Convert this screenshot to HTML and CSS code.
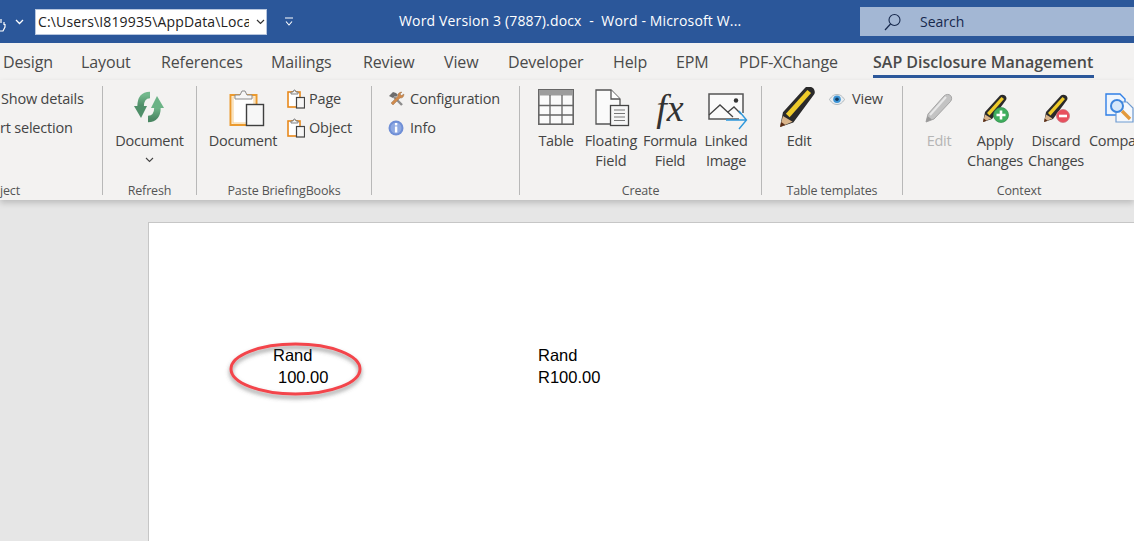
FILE: index.html
```html
<!DOCTYPE html>
<html lang="en">
<head>
<meta charset="utf-8">
<title>Word</title>
<link rel="stylesheet" href="styles.css">
</head>
<body>
<svg class="defs" width="0" height="0" aria-hidden="true">
  <defs>
    <linearGradient id="grn" x1="0" y1="0" x2="0" y2="1"><stop offset="0" stop-color="#72b88c"/><stop offset="1" stop-color="#4a8763"/></linearGradient>
    <symbol id="clipS" viewBox="0 0 18 20">
      <rect x="1" y="3" width="12" height="15" fill="#fff" stroke="#e8891c" stroke-width="1.6"/>
      <path d="M4 5V3h2l1-2h1l1 2h2v2z" fill="#f4f4f4" stroke="#777" stroke-width=".9"/>
      <rect x="9.500" y="8.500" width="8" height="10.500" fill="#f6f6f6" stroke="#444" stroke-width="1.200"/>
    </symbol>
    <symbol id="pencil" viewBox="0 0 30 30">
      <path d="M5 19 20 2.500c1-1 3.500-1 5 0s2 3.500 1 4.500L12 26l-9 3z" fill="#2a2a2a"/>
      <path d="M7 20 21.500 4l2.500 2L9.500 22.500z" fill="#efcb2a"/>
      <path d="M3 29l2-7.500 6.500 4z" fill="#d9b48a"/>
      <path d="M3 29l.9-3.400 2.700 2.100z" fill="#5b2c16"/>
    </symbol>
  </defs>
</svg>

<header class="titlebar">
  <svg class="touch" width="6" height="18" viewBox="0 0 6 18"><path d="M-3 8V3M1 8V4M4 10V7M-6 11l3 5h6l2-4V9" fill="none" stroke="#fff" stroke-width="1.200"/></svg>
  <svg class="chev" width="9" height="6" viewBox="0 0 9 6"><path d="M1 1l3.500 3.500L8 1" fill="none" stroke="#fff" stroke-width="1.300"/></svg>
  <div class="combo"><span class="combo-text">C:\Users\I819935\AppData\Local</span><svg width="9" height="6" viewBox="0 0 9 6"><path d="M1 1l3.500 3.500L8 1" fill="none" stroke="#333" stroke-width="1.200"/></svg></div>
  <svg class="qat" width="10" height="10" viewBox="0 0 10 10"><path d="M1 1h8M2 4.500l3 3.500 3-3.500" fill="none" stroke="#fff" stroke-width="1.100"/></svg>
  <div class="doc-title">Word Version 3 (7887).docx&nbsp; -&nbsp; Word - Microsoft W...</div>
  <div class="search">
    <svg width="18" height="18" viewBox="0 0 18 18"><circle cx="10.500" cy="7" r="5.500" fill="none" stroke="#17294d" stroke-width="1.100"/><path d="M6.500 11 1 17" stroke="#17294d" stroke-width="1.200"/></svg>
    <span>Search</span>
  </div>
</header>

<nav class="tabs">
  <span class="tab t-design">Design</span>
  <span class="tab t-layout">Layout</span>
  <span class="tab t-refs">References</span>
  <span class="tab t-mail">Mailings</span>
  <span class="tab t-review">Review</span>
  <span class="tab t-view">View</span>
  <span class="tab t-dev">Developer</span>
  <span class="tab t-help">Help</span>
  <span class="tab t-epm">EPM</span>
  <span class="tab t-pdf">PDF-XChange</span>
  <span class="tab tab-active">SAP Disclosure Management</span>
</nav>

<section class="ribbon">
  <div class="group g-object">
    <div class="group-body col-small">
      <span class="small-text s1">Show details</span>
      <span class="small-text s2">rt selection</span>
    </div>
    <div class="group-label left">ject</div>
  </div>

  <div class="group g-refresh">
    <div class="group-body">
      <div class="big">
        <svg class="big-icon refresh-icon" width="32" height="32" viewBox="0 0 32 32">
          <path d="M17 4C10 4 7.500 9 7.500 16" fill="none" stroke="url(#grn)" stroke-width="6.500"/>
          <path d="M1 15h13L8 27z" fill="#4f8f69"/>
          <path d="M15 28C22 28 24.500 23 24.500 16" fill="none" stroke="url(#grn)" stroke-width="6.500"/>
          <path d="M31 17H18L24 5z" fill="#6bb386"/>
        </svg>
        <span class="big-label">Document</span>
        <svg class="more" width="9" height="6" viewBox="0 0 9 6"><path d="M1 1l3.500 3.500L8 1" fill="none" stroke="#444" stroke-width="1.100"/></svg>
      </div>
    </div>
    <div class="group-label">Refresh</div>
  </div>

  <div class="group g-paste">
    <div class="group-body">
      <div class="big b-doc">
        <svg class="big-icon" width="36" height="38" viewBox="0 0 36 38">
          <rect x="1.500" y="6" width="26" height="30" fill="#fdf6e8" stroke="#eb9a2e" stroke-width="2"/>
          <rect x="4" y="8" width="21" height="26" fill="#fff" stroke="#f6cf94"/>
          <path d="M6 10V6h5l2-4h3l2 4h5v4z" fill="#f6f6f6" stroke="#8a8a8a"/>
          <rect x="17.500" y="15.500" width="17" height="21" fill="#f7f7f7" stroke="#3f3f3f" stroke-width="1.400"/>
        </svg>
        <span class="big-label">Document</span>
      </div>
      <div class="col-small paste-small">
        <div class="small-item"><svg width="18" height="20"><use href="#clipS"/></svg><span class="small-text">Page</span></div>
        <div class="small-item"><svg width="18" height="20"><use href="#clipS"/></svg><span class="small-text">Object</span></div>
      </div>
    </div>
    <div class="group-label">Paste BriefingBooks</div>
  </div>

  <div class="group g-config">
    <div class="group-body col-small config-small">
      <div class="small-item">
        <svg width="17" height="16" viewBox="0 0 17 16">
          <path d="M1 5l4-4 3 1 2 2-2 2-1-1-2 2z" fill="#6d6d6d"/>
          <path d="M6 6l8 8" stroke="#8c8c8c" stroke-width="2.400"/>
          <path d="M14 1l-2 2 1.500 1.500L16 3c0 3-2 4.500-4 4L5 14l-2-2 7-7c-.5-2 1-4 4-4z" fill="#d08a4c" stroke="#8d6a4a" stroke-width=".4"/>
        </svg>
        <span class="small-text">Configuration</span>
      </div>
      <div class="small-item">
        <svg width="17" height="16" viewBox="0 0 17 16">
          <circle cx="8" cy="8" r="7.500" fill="#6f8fd6"/><circle cx="8" cy="8" r="5.500" fill="#8ea9e2"/>
          <rect x="6.900" y="6.500" width="2.400" height="6" fill="#fff"/><rect x="6.900" y="3" width="2.400" height="2.400" fill="#fff"/>
        </svg>
        <span class="small-text">Info</span>
      </div>
    </div>
    <div class="group-label"></div>
  </div>

  <div class="group g-create">
    <div class="group-body create-body">
      <div class="big b-table">
        <svg class="big-icon" width="36" height="37" viewBox="0 0 36 37">
          <rect x=".800" y=".800" width="34.400" height="34.400" fill="#fafafa" stroke="#666" stroke-width="1.600"/>
          <rect x="1" y="1" width="34" height="5.500" fill="#9c9c9c"/>
          <path d="M12 6v29M24 6v29M1 16.500h34M1 26h34" stroke="#666" stroke-width="1.300"/>
        </svg>
        <span class="big-label">Table</span>
      </div>
      <div class="big b-float">
        <svg class="big-icon" width="35" height="38" viewBox="0 0 35 38">
          <path d="M1 1h15l9 9v25H1z" fill="#fafafa" stroke="#555" stroke-width="1.300"/>
          <path d="M16 1v9h9" fill="#fff" stroke="#555" stroke-width="1.300"/>
          <rect x="15.500" y="16.500" width="18" height="20" fill="#f6f6f6" stroke="#444" stroke-width="1.300"/>
          <path d="M19 21h11M19 24.500h11M19 28h11M19 31.500h11" stroke="#777" stroke-width="1.200"/>
        </svg>
        <span class="big-label">Floating<br>Field</span>
      </div>
      <div class="big b-formula">
        <span class="fx big-icon">fx</span>
        <span class="big-label">Formula<br>Field</span>
      </div>
      <div class="big b-linked">
        <svg class="big-icon" width="40" height="37" viewBox="0 0 40 37">
          <path d="M31 26H1V1h34v19" fill="#fafafa" stroke="#555" stroke-width="1.500"/>
          <path d="M1 22 12 12l13 12M20 19l6-5 7 7" fill="none" stroke="#444" stroke-width="1.300"/>
          <circle cx="28" cy="7.500" r="2.200" fill="#333"/>
          <path d="M18 27h20M31 18l7.500 9-7.500 9" fill="none" stroke="#2e98dc" stroke-width="1.400"/>
        </svg>
        <span class="big-label">Linked<br>Image</span>
      </div>
    </div>
    <div class="group-label">Create</div>
  </div>

  <div class="group g-templates">
    <div class="group-body templates-body">
      <div class="big b-edit">
        <svg class="big-icon edit-icon" width="37" height="40" viewBox="3 2 25 27"><use href="#pencil" width="30" height="30"/></svg>
        <span class="big-label">Edit</span>
      </div>
      <div class="small-item view-item">
        <svg width="16" height="11" viewBox="0 0 16 11">
          <path d="M.5 5.500C3 1.500 5.500.5 8 .5s5 1 7.500 5c-2.500 4-5 5-7.500 5S3 9.500.5 5.500z" fill="#e9eef2" stroke="#9aa3a9" stroke-width=".7"/>
          <circle cx="8" cy="5.200" r="3.800" fill="#3d95d6"/><circle cx="8" cy="5.200" r="1.800" fill="#143a5e"/>
        </svg>
        <span class="small-text">View</span>
      </div>
    </div>
    <div class="group-label">Table templates</div>
  </div>

  <div class="group g-context">
    <div class="group-body context-body">
      <div class="big b-c1">
        <svg class="big-icon c-icon" width="30" height="30" viewBox="0 0 30 30">
          <path d="M2 29l2-8L20 3c2-2 5-2 6.500-.5s1.500 4 0 6L10 26z" fill="#c3c3c3" stroke="#a5a5a5"/>
          <path d="M6 22 22 4" stroke="#e8e8e8" stroke-width="2"/>
          <path d="M2 29l1.500-6 4.500 3.500z" fill="#9a9a9a"/>
        </svg>
        <span class="big-label disabled">Edit</span>
      </div>
      <div class="big b-c2">
        <svg class="big-icon c-icon" width="30" height="30" viewBox="0 0 30 30">
          <use href="#pencil"/>
          <circle cx="21" cy="22" r="7.500" fill="#3fae5e" stroke="#2f8a49" stroke-width=".7"/>
          <path d="M21 17.500v9M16.500 22h9" stroke="#fff" stroke-width="2.600"/>
        </svg>
        <span class="big-label">Apply<br>Changes</span>
      </div>
      <div class="big b-c3">
        <svg class="big-icon c-icon" width="30" height="30" viewBox="0 0 30 30">
          <use href="#pencil"/>
          <circle cx="22" cy="23" r="6.500" fill="#e8505e" stroke="#c9707a" stroke-width=".7"/>
          <path d="M18 23h8" stroke="#fff" stroke-width="2.600"/>
        </svg>
        <span class="big-label">Discard<br>Changes</span>
      </div>
      <div class="big b-c4">
        <svg class="big-icon c-icon" width="30" height="30" viewBox="0 0 30 30">
          <path d="M1 1h14l5 5v16H1z" fill="#eef5fd" stroke="#2f7fe6" stroke-width="1.400"/>
          <path d="M11 9h11l6 6v14H11z" fill="#f5f8fc" stroke="#6f9bd1" stroke-width="1.200"/>
          <circle cx="12" cy="13" r="6" fill="#d7e8fa" stroke="#3f86dd" stroke-width="2"/>
          <path d="M17 18l8 8" stroke="#e29a3e" stroke-width="3.400"/>
        </svg>
        <span class="big-label">Compare</span>
      </div>
    </div>
    <div class="group-label">Context</div>
  </div>
</section>

<main class="canvas">
  <article class="page">
    <div class="doc-cols">
      <div class="doc-col first"><div>Rand</div><div class="indent">100.00</div></div>
      <div class="doc-col"><div>Rand</div><div>R100.00</div></div>
    </div>
    <svg class="ring" width="146" height="66" viewBox="0 0 146 66">
      <defs><filter id="shadow" x="-10%" y="-15%" width="120%" height="140%"><feDropShadow dx="0" dy="3" stdDeviation="2.200" flood-color="#555" flood-opacity=".65"/></filter></defs>
      <ellipse cx="72.500" cy="29" rx="64.500" ry="25" fill="none" stroke="#f3454c" stroke-width="3" filter="url(#shadow)"/>
    </svg>
  </article>
</main>
</body>
</html>
```
FILE: styles.css
```css
* { box-sizing: border-box; }
html, body { margin: 0; height: 100%; overflow: hidden; }
body {
  width: 1134px;
  height: 541px;
  display: flex;
  flex-direction: column;
  background: #e6e6e6;
  font-family: "Open Sans", "Noto Sans", sans-serif;
  color: #444;
}
.defs { position: absolute; }

/* title bar */
.titlebar {
  height: 43px;
  flex: none;
  background: #2b579a;
  display: flex;
  align-items: center;
  color: #fff;
}
.touch { margin-top: 4px; flex: none; }
.chev { margin-left: 9px; flex: none; }
.combo {
  margin-left: 11px;
  width: 232px;
  height: 26px;
  background: #fff;
  border: 1px solid #b7c6de;
  display: flex;
  align-items: center;
  color: #222;
  font-size: 14px;
  padding-left: 2px;
}
.combo-text { width: 211px; overflow: hidden; white-space: nowrap; letter-spacing: .15px; }
.combo svg { margin-left: 7px; }
.qat { margin-left: 17px; flex: none; }
.doc-title {
  margin-left: 105px;
  width: 366px;
  font-size: 14px;
  white-space: nowrap;
  margin-bottom: 3px;
  letter-spacing: .15px;
}
.search {
  margin-left: 95px;
  width: 274px;
  height: 29px;
  flex: none;
  background: #a3b7d4;
  display: flex;
  align-items: center;
  color: #17294d;
  font-size: 14px;
  padding-left: 24px;
  gap: 18px;
}

/* tabs */
.tabs {
  height: 37px;
  flex: none;
  background: #f3f2f1;
  display: flex;
  font-size: 16px;
  color: #4a4a4a;
  padding-top: 8px;
  padding-left: 3px;
  white-space: nowrap;
}
.tab { line-height: 22px; letter-spacing: -.12px; }
.t-design { width: 78px; }
.t-layout { width: 80px; }
.t-refs { width: 110px; }
.t-mail { width: 92px; }
.t-review { width: 81px; }
.t-view { width: 64px; }
.t-dev { width: 105px; }
.t-help { width: 63px; }
.t-epm { width: 63px; }
.t-pdf { width: 134px; }
.tab-active {
  font-weight: 600;
  height: 27px;
  width: 221px;
  border-bottom: 3px solid #2b579a;
  letter-spacing: 0;
}

/* ribbon */
.ribbon {
  height: 120px;
  flex: none;
  background: #f3f2f1;
  display: flex;
  padding-top: 6px;
  padding-bottom: 3px;
  box-shadow: 0 3px 6px rgba(0, 0, 0, .18);
  position: relative;
}
.group {
  flex: none;
  display: flex;
  flex-direction: column;
  border-right: 1px solid #b8b8b8;
  height: 109px;
}
.group-body { flex: 1; display: flex; min-height: 0; }
.group-label {
  height: 14px;
  font-size: 12.500px;
  line-height: 20px;
  text-align: center;
  color: #555;
  white-space: nowrap;
  letter-spacing: -.15px;
}
.group-label.left { text-align: left; }
.g-object { width: 103px; }
.g-refresh { width: 94px; }
.g-paste { width: 175px; }
.g-config { width: 148px; }
.g-create { width: 242px; }
.g-templates { width: 141px; }
.g-context { width: 232px; border-right: 0; }

.col-small { display: flex; flex-direction: column; }
.small-text { font-size: 14.500px; line-height: 20px; white-space: nowrap; letter-spacing: -.2px; }
.g-object .col-small { gap: 9px; padding-top: 3px; }
.s1 { padding-left: 1px; }
.small-item { display: flex; align-items: center; height: 20px; gap: 6px; }
.paste-small { gap: 9px; padding-top: 3px; margin-left: 9px; }
.paste-small .small-item { gap: 4px; }
.config-small { gap: 9px; padding: 3px 0 0 16px; }
.config-small .small-item { gap: 5px; }

.big {
  display: flex;
  flex-direction: column;
  align-items: center;
  flex: none;
  text-align: center;
}
.big-icon { display: block; flex: none; }
.big-label { font-size: 14.500px; line-height: 20px; white-space: nowrap; letter-spacing: -.3px; }
.disabled { color: #b5b5b5; }
.more { margin-top: 6px; }

.g-refresh .big { width: 93px; }
.refresh-icon { margin: 5px 0 8px -2px; filter: blur(.4px); }
.b-doc { margin-left: 11px; width: 70px; }
.b-doc .big-icon { margin: 3px 0 4px 8px; }
.create-body { padding-left: 18px; }
.b-table { width: 36px; }
.b-table .big-icon { margin: 3px 0 5px; }
.b-float { width: 74px; }
.b-float .big-icon { margin: 3px 0 4px 3px; }
.b-float .big-label { letter-spacing: -.1px; }
.b-formula { width: 54px; margin-left: -5px; }
.fx {
  font-family: "Liberation Serif", serif;
  font-style: italic;
  font-size: 38px;
  line-height: 38px;
  height: 38px;
  margin: 3px 0 4px;
  color: #333;
}
.b-linked { width: 54px; margin-left: 2px; }
.b-linked .big-icon { margin: 7px 0 1px 4px; }
.templates-body { padding-left: 18px; }
.b-edit { width: 38px; }
.edit-icon { margin: 1px 0 4px -1px; filter: blur(.5px); }
.view-item { margin: 3px 0 0 11px; gap: 7px; }
.context-body { padding-left: 14px; }
.b-c1 { width: 44px; }
.b-c2 { width: 58px; margin-left: 5px; }
.b-c3 { width: 54px; margin-left: 5px; }
.b-c4 { width: 50px; margin-left: 6px; align-items: flex-start; }
.c-icon { margin: 7px 0 8px; }
.b-c4 .c-icon { margin-left: 16px; }

/* document */
.canvas {
  flex: 1;
  min-height: 0;
  padding: 22px 0 0 148px;
  overflow: hidden;
}
.page {
  position: relative;
  height: 340px;
  background: #fff;
  border-top: 1px solid #c6c6c6;
  border-left: 1px solid #c6c6c6;
  padding: 121px 0 0 124px;
  font-family: "Liberation Sans", Arial, sans-serif;
  font-size: 16.500px;
  line-height: 22px;
  color: #000;
}
.doc-cols { display: flex; }
.doc-col.first { width: 265px; }
.indent { padding-left: 5px; }
.ring { position: absolute; left: 74px; top: 117px; }
```
